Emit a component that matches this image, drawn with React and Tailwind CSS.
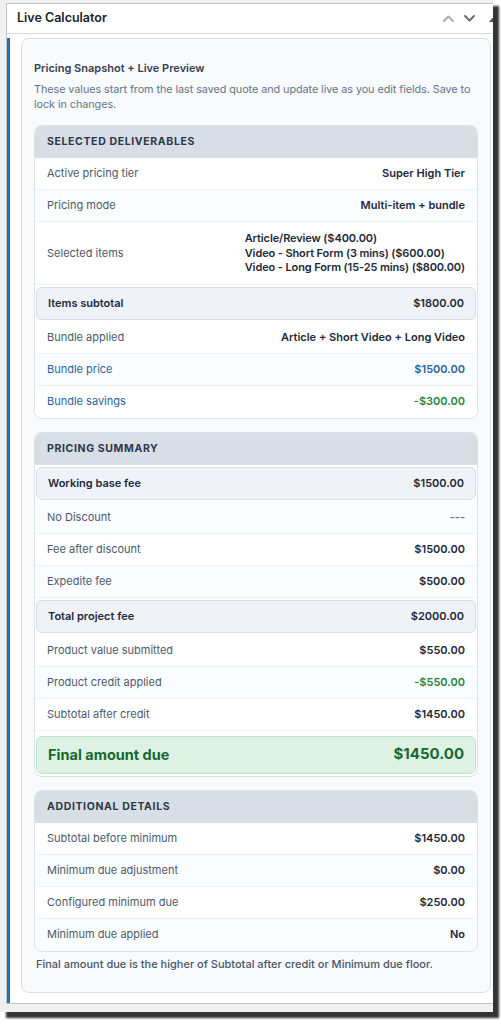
import { useState } from "react";

const FONT = { fontFamily: "Inter, 'Noto Sans', sans-serif" };

const deliverables = [
  { label: "Active pricing tier", value: "Super High Tier" },
  { label: "Pricing mode", value: "Multi-item + bundle", alt: true },
  {
    label: "Selected items",
    lines: [
      "Article/Review ($400.00)",
      "Video - Short Form (3 mins) ($600.00)",
      "Video - Long Form (15-25 mins) ($800.00)",
    ],
  },
  { label: "Items subtotal", value: "$1800.00", strong: true },
  { label: "Bundle applied", value: "Article + Short Video + Long Video" },
  { label: "Bundle price", value: "$1500.00", tone: "blue", alt: true },
  { label: "Bundle savings", value: "-$300.00", tone: "blueGreen" },
];

const summary = [
  { label: "Working base fee", value: "$1500.00", strong: true },
  { label: "No Discount", value: "---", muted: true, alt: true },
  { label: "Fee after discount", value: "$1500.00" },
  { label: "Expedite fee", value: "$500.00", alt: true },
  { label: "Total project fee", value: "$2000.00", strong: true },
  { label: "Product value submitted", value: "$550.00" },
  { label: "Product credit applied", value: "-$550.00", tone: "green", alt: true },
  { label: "Subtotal after credit", value: "$1450.00" },
];

const extra = [
  { label: "Subtotal before minimum", value: "$1450.00" },
  { label: "Minimum due adjustment", value: "$0.00", alt: true },
  { label: "Configured minimum due", value: "$250.00" },
  { label: "Minimum due applied", value: "No", alt: true },
];

function Row({ row, last }) {
  if (row.strong) {
    return (
      <div className="mx-px my-0.5 flex h-[33px] items-center justify-between rounded-md border border-[#d5dde6] bg-[#eff3f7] px-[11px] text-[11px] font-semibold text-[#1e293b]">
        <span>{row.label}</span>
        <span>{row.value}</span>
      </div>
    );
  }

  if (row.lines) {
    return (
      <div className="flex items-center justify-between border-b border-[#eef1f5] bg-white px-3 py-[9px] text-[11px]">
        <span className="text-[#4b5a6e]">{row.label}</span>
        <div className="whitespace-nowrap font-semibold leading-[14.5px] tracking-[-0.01em] text-[#1e293b]">
          {row.lines.map((l) => (
            <div key={l}>{l}</div>
          ))}
        </div>
      </div>
    );
  }

  let labelColor = "text-[#4b5a6e]";
  let valueColor = "text-[#1e293b]";
  if (row.tone === "blue") {
    labelColor = "text-[#27649e]";
    valueColor = "text-[#27649e]";
  }
  if (row.tone === "blueGreen") {
    labelColor = "text-[#27649e]";
    valueColor = "text-[#1f8443]";
  }
  if (row.tone === "green") valueColor = "text-[#1f8443]";
  if (row.muted) valueColor = "text-[#64748b]";

  return (
    <div
      className={`flex h-8 items-center justify-between px-3 text-[11px] ${
        last ? "" : "border-b border-[#eef1f5]"
      } ${row.alt ? "bg-[#fbfcfd]" : "bg-white"}`}
    >
      <span className={labelColor}>{row.label}</span>
      <span className={`font-semibold ${valueColor}`}>{row.value}</span>
    </div>
  );
}

function Section({ title, rows, children }) {
  return (
    <div className="overflow-hidden rounded-lg border border-[#d9e1e9] bg-white">
      <div className="flex h-8 items-center bg-[#d8dee6] px-3 text-[10.5px] font-bold tracking-[0.06em] text-[#2d3748]">
        {title}
      </div>
      {rows.map((r, i) => (
        <Row key={r.label} row={r} last={i === rows.length - 1 && !children} />
      ))}
      {children}
    </div>
  );
}

function Chevron({ up, color }) {
  return (
    <svg width="11" height="7" viewBox="0 0 11 7" fill="none">
      <path
        d={up ? "M1 6L5.5 1.5L10 6" : "M1 1L5.5 5.5L10 1"}
        stroke={color}
        strokeWidth="1.8"
        strokeLinecap="round"
        strokeLinejoin="round"
      />
    </svg>
  );
}

export default function App() {
  const [open] = useState(true);

  return (
    <div className="min-h-[1024px] w-[501px] bg-white" style={FONT}>
      <div className="h-[1012px] w-[493px] overflow-hidden bg-[#f0f0f1] pt-[3px] pl-[6px] shadow-[6px_6px_2px_rgba(0,0,0,0.8)]">
        <div className="w-[496px] border border-[#c3c4c7] bg-white">
          {/* Header */}
          <div className="flex h-[30px] items-center justify-between border-b border-[#dcdcde] pl-[10px]">
            <h2 className="text-[12.5px] font-semibold text-[#1d2327]">Live Calculator</h2>
            <div className="flex items-center pr-[2px]">
              <Chevron up color="#a7aaad" />
              <span className="w-[10px]" />
              <Chevron color="#646970" />
              <span className="ml-[14px] h-0 w-0 border-x-[5px] border-b-[6px] border-x-transparent border-b-[#50575e]" />
            </div>
          </div>

          {/* Body */}
          {open && (
            <div className="pt-[4px]">
              <div className="border-l-[3px] border-[#2271b1] pr-[10px] pb-[10px] pl-[11px]">
                <div className="rounded-lg border border-[#d6dee7] bg-[#f8fafc] px-[12px] pt-[22px] pb-[20px]">
                  <h3 className="text-[11px] font-semibold leading-[14px] text-[#334155]">
                    Pricing Snapshot + Live Preview
                  </h3>
                  <p className="mt-[7px] text-[10.8px] leading-[15px] tracking-[-0.005em] text-[#64748b]">
                    These values start from the last saved quote and update live as you edit fields. Save to lock in changes.
                  </p>

                  <div className="mt-[13px] flex flex-col gap-[13px]">
                    <Section title="SELECTED DELIVERABLES" rows={deliverables} />

                    <Section title="PRICING SUMMARY" rows={summary}>
                      <div className="mx-px mt-[5px] mb-[2px] flex h-[38px] items-center justify-between rounded-md border border-[#bde3c9] bg-[#ddf2e4] px-[11px] text-[14.5px] font-bold text-[#17692f]">
                        <span>Final amount due</span>
                        <span className="text-[15px]">$1450.00</span>
                      </div>
                    </Section>

                    <Section title="ADDITIONAL DETAILS" rows={extra} />
                  </div>

                  <p className="mt-[4px] pl-[2px] text-[11px] font-medium text-[#475569]">
                    Final amount due is the higher of Subtotal after credit or Minimum due floor.
                  </p>
                </div>
              </div>
            </div>
          )}
        </div>
      </div>
    </div>
  );
}
